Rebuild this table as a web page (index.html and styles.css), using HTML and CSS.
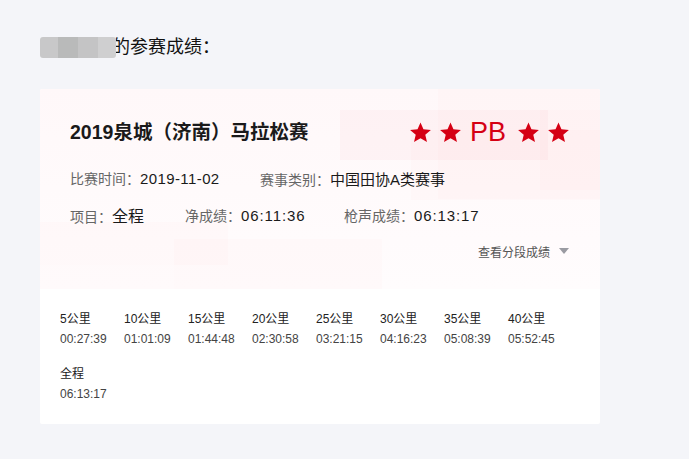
FILE: index.html
```html
<!DOCTYPE html>
<html lang="zh">
<head>
<meta charset="utf-8">
<link rel="stylesheet" href="styles.css">
</head>
<body>
<div class="page">
  <div class="heading">
    <span class="blur"><i class="t1"></i><i class="t2"></i><i class="t3"></i><i class="t4"></i></span><span class="htext">的参赛成绩：</span>
  </div>
  <div class="card">
    <div class="deco">
      <i class="d d0"></i>
      <i class="d d1"></i>
      <i class="d d2"></i>
      <i class="d d3"></i>
      <i class="d d4"></i>
      <i class="d d5"></i>
      <i class="d d6"></i>
      <i class="d d7"></i>
    </div>
    <div class="info">
      <div class="title-row">
        <div class="title">2019泉城（济南）马拉松赛</div>
        <div class="pb">
          <svg class="star" viewBox="1 1 22 22"><path d="M12 1.5l3.1 7.2 7.8.6-5.9 5.1 1.8 7.6L12 17.9 5.2 22l1.8-7.6L1.1 9.3l7.8-.6z"/></svg>
          <svg class="star" viewBox="1 1 22 22"><path d="M12 1.5l3.1 7.2 7.8.6-5.9 5.1 1.8 7.6L12 17.9 5.2 22l1.8-7.6L1.1 9.3l7.8-.6z"/></svg>
          <span class="pbtext">PB</span>
          <svg class="star" viewBox="1 1 22 22"><path d="M12 1.5l3.1 7.2 7.8.6-5.9 5.1 1.8 7.6L12 17.9 5.2 22l1.8-7.6L1.1 9.3l7.8-.6z"/></svg>
          <svg class="star" viewBox="1 1 22 22"><path d="M12 1.5l3.1 7.2 7.8.6-5.9 5.1 1.8 7.6L12 17.9 5.2 22l1.8-7.6L1.1 9.3l7.8-.6z"/></svg>
        </div>
      </div>
      <div class="row row2">
        <div class="item w190"><span class="label">比赛时间：</span><span class="val sp1">2019-11-02</span></div>
        <div class="item"><span class="label">赛事类别：</span><span class="val">中国田协A类赛事</span></div>
      </div>
      <div class="row row3">
        <div class="item w115"><span class="label">项目：</span><span class="val big">全程</span></div>
        <div class="item w159"><span class="label">净成绩：</span><span class="val sp2">06:11:36</span></div>
        <div class="item"><span class="label">枪声成绩：</span><span class="val sp2">06:13:17</span></div>
      </div>
      <div class="more"><span>查看分段成绩</span><i class="tri"></i></div>
    </div>
    <div class="splits">
      <div class="sp"><div class="sl">5公里</div><div class="st">00:27:39</div></div>
      <div class="sp"><div class="sl">10公里</div><div class="st">01:01:09</div></div>
      <div class="sp"><div class="sl">15公里</div><div class="st">01:44:48</div></div>
      <div class="sp"><div class="sl">20公里</div><div class="st">02:30:58</div></div>
      <div class="sp"><div class="sl">25公里</div><div class="st">03:21:15</div></div>
      <div class="sp"><div class="sl">30公里</div><div class="st">04:16:23</div></div>
      <div class="sp"><div class="sl">35公里</div><div class="st">05:08:39</div></div>
      <div class="sp"><div class="sl">40公里</div><div class="st">05:52:45</div></div>
      <div class="sp"><div class="sl">全程</div><div class="st">06:13:17</div></div>
    </div>
  </div>
</div>
</body>
</html>
```

FILE: styles.css
```css
* { box-sizing: border-box; }
html, body { margin: 0; padding: 0; }
body {
  background: #f4f5f9;
  font-family: "Liberation Sans", "Noto Sans CJK SC", sans-serif;
  color: #222;
  width: 689px;
  height: 459px;
  overflow: hidden;
}
.page { padding: 37px 0 0 40px; }
.heading {
  display: flex;
  align-items: center;
  height: 21px;
  font-size: 18px;
  color: #111;
}
.blur {
  display: inline-flex;
  height: 21px;
  margin-right: -4px;
  position: relative;
  z-index: 1;
  border-radius: 3px;
  overflow: hidden;
}
.blur i { display: block; height: 21px; }
.blur .t1 { width: 18px; background: #c8c8c9; }
.blur .t2 { width: 20px; background: #b9baba; }
.blur .t3 { width: 20px; background: #c4c4c5; }
.blur .t4 { width: 18px; background: #cfcfd0; }
.htext { line-height: 21px; }

.card {
  position: relative;
  margin-top: 31px;
  width: 560px;
  height: 335px;
  background: #fff;
  border-radius: 2px;
  overflow: hidden;
}
.deco { position: absolute; inset: 0; pointer-events: none; }
.d { position: absolute; display: block; }
.d0 { left: 0; top: 0; width: 560px; height: 200px; background: linear-gradient(#fff8f9, #fffcfd); }
.d1 { left: 300px; top: 21px; width: 208px; height: 50px; background: rgba(240, 90, 120, 0.045); }
.d2 { left: 398px; top: 0; width: 162px; height: 110px; background: rgba(240, 90, 120, 0.018); }
.d3 { left: 371px; top: 41px; width: 189px; height: 70px; background: rgba(240, 90, 120, 0.018); }
.d4 { left: 0; top: 133px; width: 188px; height: 43px; background: rgba(240, 90, 120, 0.02); }
.d5 { left: 134px; top: 150px; width: 208px; height: 50px; background: rgba(240, 90, 120, 0.02); }
.d6 { left: 0; top: 176px; width: 134px; height: 24px; background: rgba(240, 90, 120, 0.01); }
.d7 { left: 500px; top: 21px; width: 60px; height: 80px; background: rgba(240, 90, 120, 0.02); }

.info { position: relative; padding: 29px 30px 0 30px; }
.title-row {
  display: flex;
  align-items: center;
  height: 28px;
}
.title {
  font-size: 19.5px;
  font-weight: bold;
  color: #1a1a1a;
  line-height: 28px;
  width: 340px;
  flex-shrink: 0;
}
.pb {
  display: flex;
  align-items: center;
  flex-shrink: 0;
  color: #d50014;
}
.star { width: 21px; height: 21px; fill: #d50014; margin-right: 9px; flex-shrink: 0; }
.pbtext {
  font-size: 27px;
  line-height: 28px;
  margin: 0 12px 0 0;
}
.row { display: flex; align-items: center; height: 20px; }
.row2 { margin-top: 22px; }
.row3 { margin-top: 17px; }
.item { display: flex; align-items: baseline; white-space: nowrap; }
.w190 { width: 190px; }
.w115 { width: 115px; }
.w159 { width: 159px; }
.label { font-size: 14px; color: #666; }
.val { font-size: 15px; color: #1a1a1a; }
.val.big { font-size: 16px; }
.sp1 { letter-spacing: 0.4px; }
.sp2 { letter-spacing: 0.9px; }

.more {
  display: flex;
  align-items: center;
  justify-content: flex-end;
  margin-top: 16px;
  height: 20px;
  font-size: 12px;
  color: #555;
  padding-right: 1px;
}
.tri {
  display: block;
  width: 0;
  height: 0;
  margin-left: 9px;
  border-left: 5px solid transparent;
  border-right: 5px solid transparent;
  border-top: 6px solid #9a9ba2;
}

.splits {
  position: relative;
  display: grid;
  grid-template-columns: repeat(8, 64px);
  row-gap: 19px;
  padding: 50px 20px 0 20px;
}
.sp { display: flex; flex-direction: column; gap: 4px; }
.sl { font-size: 12px; line-height: 16px; color: #222; }
.st { font-size: 12px; line-height: 16px; color: #444; }
```
